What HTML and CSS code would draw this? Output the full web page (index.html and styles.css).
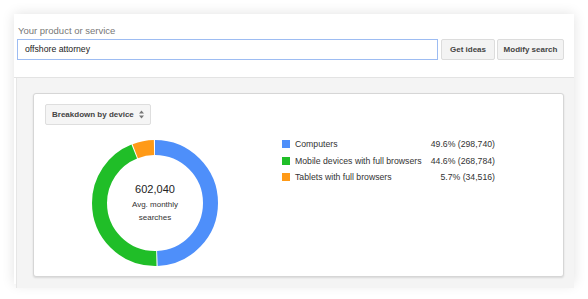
FILE: index.html
```html
<!DOCTYPE html>
<html>
<head>
<meta charset="utf-8">
<link rel="stylesheet" href="styles.css">
</head>
<body>
<div class="card">
  <div class="search">
    <div class="label">Your product or service</div>
    <div class="row">
      <div class="input">offshore attorney</div>
      <button class="btn btn-ideas">Get ideas</button>
      <button class="btn btn-modify">Modify search</button>
    </div>
  </div>
  <div class="panel">
    <div class="inner">
      <div class="dropdown">
        <span>Breakdown by device</span>
        <svg class="updown" width="5" height="9" viewBox="0 0 5 9"><path d="M2.5 0.5 L5 3.5 L0 3.5 Z M2.5 8.5 L5 5.5 L0 5.5 Z" fill="#777"/></svg>
      </div>
      <div class="chart">
        <div class="donut">
          <svg class="ring" width="126" height="126" viewBox="0 0 126 126">
            <g transform="rotate(-90 63 63)">
              <circle cx="63" cy="63" r="55.5" fill="none" stroke="#4e8ffa" stroke-width="15" pathLength="100" stroke-dasharray="49.3 50.7" stroke-dashoffset="0"/>
              <circle cx="63" cy="63" r="55.5" fill="none" stroke="#20be28" stroke-width="15" pathLength="100" stroke-dasharray="44.3 55.7" stroke-dashoffset="-49.6"/>
              <circle cx="63" cy="63" r="55.5" fill="none" stroke="#ff9a17" stroke-width="15" pathLength="100" stroke-dasharray="5.5 94.5" stroke-dashoffset="-94.2"/>
            </g>
          </svg>
          <div class="center">
            <div class="total">602,040</div>
            <div class="sub">Avg. monthly<br>searches</div>
          </div>
        </div>
        <div class="legend">
          <span class="sw sw-blue"></span><span class="name">Computers</span><span class="val">49.6% (298,740)</span>
          <span class="sw sw-green"></span><span class="name">Mobile devices with full browsers</span><span class="val">44.6% (268,784)</span>
          <span class="sw sw-orange"></span><span class="name">Tablets with full browsers</span><span class="val">5.7% (34,516)</span>
        </div>
      </div>
    </div>
  </div>
</div>
</body>
</html>
```

FILE: styles.css
```css
html, body {
  margin: 0;
  padding: 0;
  background: #ffffff;
}
body {
  font-family: "Liberation Sans", Arial, sans-serif;
  color: #333;
}
.card {
  margin: 14px;
  width: 560px;
  height: 270px;
  background: #fff;
  box-shadow: 0 0 12px rgba(0, 0, 0, 0.12);
  display: flex;
  flex-direction: column;
}
.search {
  padding: 9px 10px 17px 3px;
  border-bottom: 1px solid #e3e3e3;
}
.label {
  font-size: 9.5px;
  line-height: 15px;
  color: #777;
  margin-bottom: 1px;
  padding-left: 1px;
}
.row {
  display: flex;
}
.input {
  box-sizing: border-box;
  width: 421px;
  height: 21px;
  border: 1px solid #9dbcf2;
  padding-left: 7px;
  font-size: 8.7px;
  line-height: 19px;
  color: #222;
}
.btn {
  box-sizing: border-box;
  height: 21px;
  border: 1px solid #dcdcdc;
  border-radius: 2px;
  background: #f3f3f3;
  font-family: "Liberation Sans", Arial, sans-serif;
  font-weight: bold;
  font-size: 8px;
  color: #444;
  padding: 0;
}
.btn-ideas {
  width: 54px;
  margin-left: 3px;
}
.btn-modify {
  width: 67px;
  margin-left: 2px;
}
.panel {
  flex: 1;
  margin-left: 2px;
  border-left: 1px solid #e6e6e6;
  background: #f4f4f4;
  padding: 15px 10px 11px 16px;
  display: flex;
}
.inner {
  flex: 1;
  box-sizing: border-box;
  background: #fff;
  border: 1px solid #d6d6d6;
  border-radius: 3px;
  box-shadow: 0 1px 2px rgba(0, 0, 0, 0.12);
  padding: 10px 11px;
}
.dropdown {
  box-sizing: border-box;
  width: 106px;
  height: 21px;
  display: flex;
  align-items: center;
  gap: 5px;
  border: 1px solid #dedede;
  border-radius: 2px;
  background: #f5f5f5;
  padding-left: 6px;
  font-weight: bold;
  font-size: 8px;
  color: #444;
}
.updown {
  display: block;
}
.chart {
  display: flex;
  align-items: flex-start;
  margin-top: 11px;
}
.donut {
  display: grid;
  width: 126px;
  height: 126px;
  margin-left: 47px;
  margin-top: 4px;
}
.ring, .center {
  grid-area: 1 / 1;
}
.ring {
  display: block;
}
.center {
  align-self: center;
  text-align: center;
  padding-bottom: 1px;
}
.total {
  font-size: 11px;
  line-height: 15px;
  color: #222;
  margin-bottom: 1px;
}
.sub {
  font-size: 8px;
  line-height: 13px;
  color: #333;
}
.legend {
  margin-left: 64px;
  width: 213px;
  display: grid;
  grid-template-columns: 8px 1fr auto;
  column-gap: 5px;
  align-items: center;
  font-size: 8.7px;
  line-height: 16.5px;
  color: #333;
}
.sw {
  width: 8px;
  height: 8px;
}
.sw-blue { background: #4e8ffa; }
.sw-green { background: #20be28; }
.sw-orange { background: #ff9a17; }
.val {
  text-align: right;
}
```
